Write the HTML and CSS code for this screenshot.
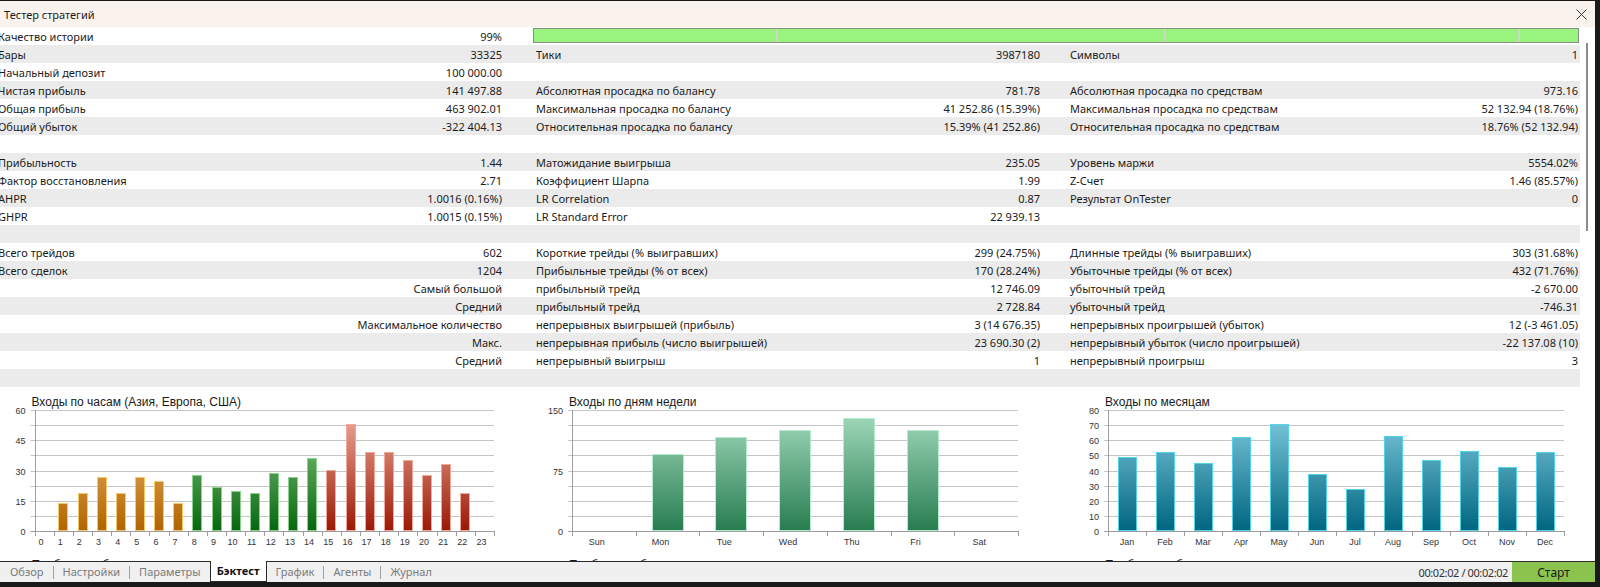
FILE: index.html
```html
<!DOCTYPE html>
<html lang="ru">
<head>
    <meta charset="UTF-8">
    <meta name="viewport" content="width=device-width, initial-scale=1.0">
    <title>Тестер стратегий</title>
    <link rel="stylesheet" href="styles.css">
</head>
<body>
<div class="window">
    <div class="titlebar">
        <span>Тестер стратегий</span>
        <svg class="close" width="11" height="11" viewBox="0 0 11 11"><path d="M0.5 0.5L10.5 10.5M10.5 0.5L0.5 10.5"/></svg>
    </div>

    <div class="main">
        <div class="content">
            <div class="stats">
                <div class="row">
                    <div class="cell"><span>Качество истории</span><span>99%</span></div>
                    <div class="quality"><i style="flex: 243"></i><i style="flex: 389"></i><i style="flex: 354"></i><i style="flex: 58"></i></div>
                </div>
                <div class="row">
                    <div class="cell"><span>Бары</span><span>33325</span></div>
                    <div class="cell"><span>Тики</span><span>3987180</span></div>
                    <div class="cell"><span>Символы</span><span>1</span></div>
                </div>
                <div class="row">
                    <div class="cell"><span>Начальный депозит</span><span>100 000.00</span></div>
                    <div class="cell"></div>
                    <div class="cell"></div>
                </div>
                <div class="row">
                    <div class="cell"><span>Чистая прибыль</span><span>141 497.88</span></div>
                    <div class="cell"><span>Абсолютная просадка по балансу</span><span>781.78</span></div>
                    <div class="cell"><span>Абсолютная просадка по средствам</span><span>973.16</span></div>
                </div>
                <div class="row">
                    <div class="cell"><span>Общая прибыль</span><span>463 902.01</span></div>
                    <div class="cell"><span>Максимальная просадка по балансу</span><span>41 252.86 (15.39%)</span></div>
                    <div class="cell"><span>Максимальная просадка по средствам</span><span>52 132.94 (18.76%)</span></div>
                </div>
                <div class="row">
                    <div class="cell"><span>Общий убыток</span><span>-322 404.13</span></div>
                    <div class="cell"><span>Относительная просадка по балансу</span><span>15.39% (41 252.86)</span></div>
                    <div class="cell"><span>Относительная просадка по средствам</span><span>18.76% (52 132.94)</span></div>
                </div>
                <div class="row"></div>
                <div class="row">
                    <div class="cell"><span>Прибыльность</span><span>1.44</span></div>
                    <div class="cell"><span>Матожидание выигрыша</span><span>235.05</span></div>
                    <div class="cell"><span>Уровень маржи</span><span>5554.02%</span></div>
                </div>
                <div class="row">
                    <div class="cell"><span>Фактор восстановления</span><span>2.71</span></div>
                    <div class="cell"><span>Коэффициент Шарпа</span><span>1.99</span></div>
                    <div class="cell"><span>Z-Счет</span><span>1.46 (85.57%)</span></div>
                </div>
                <div class="row">
                    <div class="cell"><span>AHPR</span><span>1.0016 (0.16%)</span></div>
                    <div class="cell"><span>LR Correlation</span><span>0.87</span></div>
                    <div class="cell"><span>Результат OnTester</span><span>0</span></div>
                </div>
                <div class="row">
                    <div class="cell"><span>GHPR</span><span>1.0015 (0.15%)</span></div>
                    <div class="cell"><span>LR Standard Error</span><span>22 939.13</span></div>
                    <div class="cell"></div>
                </div>
                <div class="row"></div>
                <div class="row">
                    <div class="cell"><span>Всего трейдов</span><span>602</span></div>
                    <div class="cell"><span>Короткие трейды (% выигравших)</span><span>299 (24.75%)</span></div>
                    <div class="cell"><span>Длинные трейды (% выигравших)</span><span>303 (31.68%)</span></div>
                </div>
                <div class="row">
                    <div class="cell"><span>Всего сделок</span><span>1204</span></div>
                    <div class="cell"><span>Прибыльные трейды (% от всех)</span><span>170 (28.24%)</span></div>
                    <div class="cell"><span>Убыточные трейды (% от всех)</span><span>432 (71.76%)</span></div>
                </div>
                <div class="row">
                    <div class="cell end"><span>Самый большой</span></div>
                    <div class="cell"><span>прибыльный трейд</span><span>12 746.09</span></div>
                    <div class="cell"><span>убыточный трейд</span><span>-2 670.00</span></div>
                </div>
                <div class="row">
                    <div class="cell end"><span>Средний</span></div>
                    <div class="cell"><span>прибыльный трейд</span><span>2 728.84</span></div>
                    <div class="cell"><span>убыточный трейд</span><span>-746.31</span></div>
                </div>
                <div class="row">
                    <div class="cell end"><span>Максимальное количество</span></div>
                    <div class="cell"><span>непрерывных выигрышей (прибыль)</span><span>3 (14 676.35)</span></div>
                    <div class="cell"><span>непрерывных проигрышей (убыток)</span><span>12 (-3 461.05)</span></div>
                </div>
                <div class="row">
                    <div class="cell end"><span>Макс.</span></div>
                    <div class="cell"><span>непрерывная прибыль (число выигрышей)</span><span>23 690.30 (2)</span></div>
                    <div class="cell"><span>непрерывный убыток (число проигрышей)</span><span>-22 137.08 (10)</span></div>
                </div>
                <div class="row">
                    <div class="cell end"><span>Средний</span></div>
                    <div class="cell"><span>непрерывный выигрыш</span><span>1</span></div>
                    <div class="cell"><span>непрерывный проигрыш</span><span>3</span></div>
                </div>
                <div class="row"></div>
            </div>

            <div class="charts">
                <div class="chart" id="hours"></div>
                <div class="chart" id="days"></div>
                <div class="chart" id="months"></div>
            </div>
        </div>
        <div class="scroll"><div class="thumb"></div></div>
    </div>

    <div class="tabbar">
        <span class="tab first">Обзор</span><span class="sep"></span>
        <span class="tab">Настройки</span><span class="sep"></span>
        <span class="tab">Параметры</span>
        <span class="tab active">Бэктест</span>
        <span class="tab">График</span><span class="sep"></span>
        <span class="tab">Агенты</span><span class="sep"></span>
        <span class="tab">Журнал</span>
        <span class="time">00:02:02 / 00:02:02</span>
        <span class="start">Старт</span>
    </div>
</div>

<script>
    const hours = [0, 14, 19, 27, 19, 27, 25, 14, 28, 22, 20, 19, 29, 27, 36, 30, 53, 39, 39, 35, 28, 33, 19, 0];
    const days = [0, 96, 116, 125, 140, 125, 0];
    const months = [49, 52, 45, 62, 71, 38, 28, 63, 47, 53, 42, 52];

    //fill: top colour, bottom colour, border
    const charts = [
        {
            id: 'hours', title: 'Входы по часам (Азия, Европа, США)', next: 'Прибыли и убытки по часам',
            axis: 38.5, right: 498, max: 60, step: 2, shift: -3,
            cats: hours.map(function (v, i) { return String(i); }), values: hours,
            fills: [['#f4c47e', '#b06400', '#f7c86a'], ['#92d08b', '#07660f', '#88d28c'], ['#f0ae9e', '#9a1806', '#f2a898']],
            group: function (i) { return i < 8 ? 0 : (i < 15 ? 1 : 2); }
        },
        {
            id: 'days', title: 'Входы по дням недели', next: 'Прибыли и убытки по дням недели',
            axis: 38, right: 484, max: 150, step: 4, shift: -7,
            cats: ['Sun', 'Mon', 'Tue', 'Wed', 'Thu', 'Fri', 'Sat'], values: days,
            fills: [['#a4dcbd', '#277c50', '#b6ecce']],
            group: function () { return 0; }
        },
        {
            id: 'months', title: 'Входы по месяцам', next: 'Прибыли и убытки по месяцам',
            axis: 36, right: 492, max: 80, step: 1, shift: 0,
            cats: ['Jan', 'Feb', 'Mar', 'Apr', 'May', 'Jun', 'Jul', 'Aug', 'Sep', 'Oct', 'Nov', 'Dec'], values: months,
            fills: [['#82cde0', '#006580', '#55d2ec']],
            group: function () { return 0; }
        }
    ];

    for (let i = 0; i < charts.length; i++) {
        drawChart(charts[i]);
    }

    function drawChart(c) {
        const top = 23, bottom = 144;
        const cw = (c.right - c.axis) / c.cats.length;
        let s = '<svg width="508" height="190">';

        s += '<defs>';
        for (let n = 0; n < c.fills.length; n++) {
            s += '<linearGradient id="' + c.id + n + '" gradientUnits="userSpaceOnUse" x1="0" y1="' + top + '" x2="0" y2="' + bottom + '">'
                + '<stop offset="0" stop-color="' + c.fills[n][0] + '"/><stop offset="1" stop-color="' + c.fills[n][1] + '"/></linearGradient>';
        }
        s += '</defs>';
        s += '<text class="chart-title" x="' + (c.axis - 3) + '" y="19">' + c.title + '</text>';

        //grid lines with the value labels
        for (let i = 0; i <= 8; i++) {
            const y = Math.round(top + (bottom - top) * i / 8) + 0.5;
            s += '<line class="' + (i === 8 ? 'axis' : 'grid') + '" x1="' + (c.axis - 4) + '" y1="' + y + '" x2="' + c.right + '" y2="' + y + '"/>';
            if (i % c.step === 0) {
                s += '<text class="tick" text-anchor="end" x="' + (c.axis - 9) + '" y="' + (y + 3) + '">' + (c.max * (8 - i) / 8) + '</text>';
            }
        }

        const ax = Math.round(c.axis) + 0.5;
        s += '<line class="axis" x1="' + ax + '" y1="' + top + '" x2="' + ax + '" y2="' + (bottom + 5) + '"/>';

        //bars, ticks and category names
        for (let i = 0; i < c.cats.length; i++) {
            const x = c.axis + cw * i;
            const tx = Math.round(x + cw) + 0.5;
            s += '<line class="axis" x1="' + tx + '" y1="' + bottom + '" x2="' + tx + '" y2="' + (bottom + 5) + '"/>';
            s += '<text class="tick" text-anchor="middle" x="' + (x + cw / 2 + c.shift) + '" y="158">' + c.cats[i] + '</text>';

            const v = c.values[i];
            if (v > 0) {
                const h = Math.round(v * (bottom - top) / c.max);
                const g = c.group(i);
                s += '<rect x="' + (Math.round(x + cw / 4) + 0.5) + '" y="' + (bottom - h + 0.5) + '" width="' + Math.round(cw / 2 - 1)
                    + '" height="' + (h - 1) + '" fill="url(#' + c.id + g + ')" stroke="' + c.fills[g][2] + '"/>';
            }
        }

        s += '<text class="chart-title" x="' + (c.axis - 3) + '" y="182">' + c.next + '</text>';
        s += '</svg>';
        document.getElementById(c.id).innerHTML = s;
    }
</script>
</body>
</html>
```

FILE: styles.css
```css
body {
    margin: 0;
    background: #1a1a1a;
    font-family: "Noto Sans", "Open Sans", sans-serif;
    font-size: 11px;
    color: #1b1b1b;
}

.window {
    width: 1595px;
    height: 581px;
    margin-top: 1px;
    background: #fff;
    display: flex;
    flex-direction: column;
    overflow: hidden;
}

.titlebar {
    height: 26px;
    flex: none;
    background: #faf2ec;
    display: flex;
    align-items: center;
    justify-content: space-between;
    padding: 0 8px 0 4px;
}

.close path {
    stroke: #333;
    stroke-width: 1;
    fill: none;
}

.main {
    flex: 1;
    min-height: 0;
    display: flex;
    overflow: hidden;
}

.content {
    width: 1580px;
    flex: none;
    overflow: hidden;
}

.stats,
.charts {
    width: 1584px;
    margin-left: -4px;
}

.row {
    display: grid;
    grid-template-columns: 538px 534px 1fr;
    height: 18px;
}

.row:nth-child(even) {
    background: #ebebeb;
}

.cell {
    display: flex;
    justify-content: space-between;
    align-items: center;
    padding: 0 2px;
    white-space: nowrap;
}

.cell:nth-child(1) {
    padding-right: 32px;
}

.cell:nth-child(2) {
    padding-right: 28px;
}

.cell.end {
    justify-content: flex-end;
}

.quality {
    grid-column: 2 / 4;
    display: flex;
    margin: 1px 1px 2px -1px;
    border: 1px solid #8c8c8c;
    background: #99f47e;
}

.quality i {
    border-left: 2px solid #cad8c4;
}

.quality i:first-child {
    border-left: 0;
}

.charts {
    display: grid;
    grid-template-columns: repeat(3, 1fr);
    column-gap: 30px;
}

.chart svg {
    display: block;
}

.chart-title {
    font: 12px "Liberation Sans", Arial, sans-serif;
    fill: #1a1a1a;
}

.tick {
    font: 9px "Liberation Sans", Arial, sans-serif;
    fill: #333;
}

.grid {
    stroke: #c6c6c6;
}

.axis {
    stroke: #9d9d9d;
}

.scroll {
    width: 15px;
    flex: none;
}

.thumb {
    width: 2px;
    height: 188px;
    margin: 16px 0 0 6px;
    background: #8c8c8c;
}

.tabbar {
    height: 20px;
    flex: none;
    border-top: 1px solid #2a2a2a;
    background: #f0f0f0;
    display: flex;
    align-items: center;
}

.tab {
    padding: 0 9px;
    color: #7b7b7b;
    line-height: 20px;
}

.tab.first {
    padding-left: 10px;
}

.sep {
    width: 1px;
    height: 13px;
    background: #a0a0a0;
}

.tab.active {
    align-self: flex-start;
    height: 20px;
    margin-top: -1px;
    padding: 0 6px;
    border: 1px solid #2a2a2a;
    border-top: 0;
    background: #fff;
    color: #111;
    font-weight: bold;
}

.time {
    margin-left: auto;
    padding-right: 4px;
    color: #333;
    letter-spacing: -0.4px;
}

.start {
    align-self: stretch;
    width: 83px;
    background: #8cc34f;
    color: #1a1a1a;
    display: flex;
    align-items: center;
    justify-content: center;
    font-size: 12px;
}
```
